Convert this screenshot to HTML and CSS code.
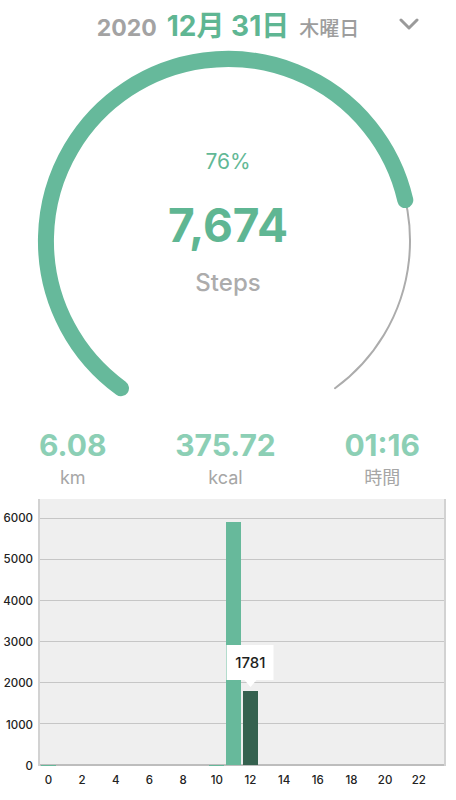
FILE: index.html
```html
<!DOCTYPE html>
<html lang="ja">
<head>
    <meta charset="UTF-8">
    <meta name="viewport" content="width=device-width, initial-scale=1.0">
    <title>Steps</title>
    <link rel="stylesheet" href="styles.css">
</head>
<body>

<div class="date-bar">
    <div></div>
    <div class="date">
        <span class="year">2020</span>
        <span class="day">12月 31日</span>
        <span class="weekday">木曜日</span>
    </div>
    <div class="toggle">
        <svg width="20" height="14" viewBox="0 0 20 14">
            <path d="M2 3 L10 11 L18 3" fill="none" stroke="#9a9a9a" stroke-width="3" stroke-linecap="round" stroke-linejoin="round"/>
        </svg>
    </div>
</div>

<div class="gauge">
    <svg class="ring" width="456" height="366" viewBox="0 44 456 366">
        <path d="M121.0 388.2 A182 182 0 1 1 335.0 388.2" fill="none" stroke="#acacac" stroke-width="2" stroke-linecap="round"/>
        <path d="M121.0 388.2 A182 182 0 1 1 405.3 200.1" fill="none" stroke="#66b99b" stroke-width="16" stroke-linecap="round"/>
    </svg>
    <div class="gauge-text">
        <div class="percent">76%</div>
        <div class="steps">7,674</div>
        <div class="unit">Steps</div>
    </div>
</div>

<div class="stats">
    <div class="stat">
        <div class="stat-value">6.08</div>
        <div class="stat-label">km</div>
    </div>
    <div class="stat">
        <div class="stat-value">375.72</div>
        <div class="stat-label">kcal</div>
    </div>
    <div class="stat">
        <div class="stat-value">01:16</div>
        <div class="stat-label">時間</div>
    </div>
</div>

<div class="chart">
    <div class="y-axis">
        <span>6000</span>
        <span>5000</span>
        <span>4000</span>
        <span>3000</span>
        <span>2000</span>
        <span>1000</span>
        <span>0</span>
    </div>
    <div class="plot">
        <div class="grid-lines">
            <div></div><div></div><div></div><div></div><div></div><div></div>
        </div>
        <div class="bars" id="bars"></div>
    </div>
    <div></div>
    <div class="x-axis" id="xAxis"></div>
</div>

<script>
    const hourly = [12, 0, 0, 0, 0, 0, 0, 0, 0, 0, 12, 5881, 1781, 0, 0, 0, 0, 0, 0, 0, 0, 0, 0, 0];
    const selected = 12;
    const max = 6000 / 248; // steps per pixel on the grid

    const bars = document.getElementById("bars");
    const xAxis = document.getElementById("xAxis");

    hourly.forEach((value, hour) => {
        const slot = document.createElement("div");
        slot.className = "slot";

        const bar = document.createElement("div");
        bar.className = hour === selected ? "bar active" : "bar";
        bar.style.height = (value / max) + "px";
        slot.appendChild(bar);

        if (hour === selected) {
            const tip = document.createElement("div");
            tip.className = "tooltip";
            tip.style.bottom = (value / max + 11) + "px";
            tip.textContent = value;
            slot.appendChild(tip);
        }
        bars.appendChild(slot);

        const label = document.createElement("span");
        label.textContent = hour % 2 === 0 ? hour : "";
        xAxis.appendChild(label);
    });
</script>

</body>
</html>
```

FILE: styles.css
```css
body {
    margin: 0;
    background-color: #fff;
    font-family: 'Inter', 'Noto Sans CJK JP', sans-serif;
    width: 456px;
    overflow: hidden;
}

.date-bar {
    display: grid;
    grid-template-columns: 1fr auto 1fr;
    align-items: center;
    height: 44px;
    padding-top: 4px;
    box-sizing: border-box;
}

.date {
    display: flex;
    align-items: baseline;
    gap: 10px;
    font-weight: bold;
    white-space: nowrap;
}

.year {
    font-size: 23px;
    color: #a3a3a3;
}

.day {
    font-size: 28px;
    color: #5fb693;
}

.weekday {
    font-size: 20px;
    color: #9d9d9d;
    font-weight: 500;
}

.toggle {
    justify-self: end;
    padding-right: 37px;
    display: flex;
}

.gauge {
    position: relative;
    height: 366px;
}

.ring {
    display: block;
}

.gauge-text {
    position: absolute;
    top: 106px;
    left: 0;
    right: 0;
    display: flex;
    flex-direction: column;
    align-items: center;
}

.percent {
    font-size: 21px;
    line-height: 24px;
    color: #62b896;
}

.steps {
    margin-top: 26px;
    font-size: 46px;
    line-height: 50px;
    font-weight: bold;
    color: #5fb693;
}

.unit {
    margin-top: 19px;
    font-size: 24px;
    line-height: 28px;
    font-weight: 500;
    color: #acacac;
}

.stats {
    display: flex;
    justify-content: space-between;
    padding: 17px 36px 11px 39px;
}

.stat {
    display: flex;
    flex-direction: column;
    align-items: center;
}

.stat-value {
    font-size: 30px;
    line-height: 36px;
    font-weight: bold;
    color: #8ccfb5;
}

.stat-label {
    margin-top: 5px;
    font-size: 18px;
    line-height: 20px;
    color: #a6a6a6;
}

.chart {
    display: grid;
    grid-template-columns: 38px 408px;
    font-size: 11.5px;
    font-weight: 500;
    color: #222;
}

.y-axis {
    display: flex;
    flex-direction: column;
    justify-content: space-between;
    align-items: flex-end;
    padding: 12px 5px 0 0;
    margin-bottom: -7px;
    line-height: 14px;
}

.plot {
    position: relative;
    height: 267px;
    background-color: #efefef;
    border-left: 2px solid #d2d2d2;
    border-right: 2px solid #d2d2d2;
    box-sizing: border-box;
}

.grid-lines {
    margin-top: 19px;
    height: 248px;
    display: flex;
    flex-direction: column;
    border-bottom: 2px solid #bdbdbd;
    box-sizing: border-box;
}

.grid-lines div {
    flex: 1;
    border-top: 1.5px solid #c6c6c6;
}

.bars {
    position: absolute;
    left: 0;
    right: 0;
    bottom: 1px;
    height: 248px;
    display: grid;
    grid-template-columns: repeat(24, 1fr);
    align-items: end;
}

.slot {
    position: relative;
    display: flex;
    justify-content: center;
    align-items: flex-end;
    height: 100%;
}

.bar {
    width: 15px;
    background-color: #67b99b;
}

.bar.active {
    background-color: #35614f;
}

.tooltip {
    position: absolute;
    left: 50%;
    transform: translateX(-50%);
    width: 47px;
    height: 35px;
    background-color: #fff;
    font-size: 15px;
    line-height: 35px;
    text-align: center;
    color: #1e1e1e;
}

.tooltip::after {
    content: "";
    position: absolute;
    left: 50%;
    top: 35px;
    margin-left: -6px;
    border-left: 6px solid transparent;
    border-right: 6px solid transparent;
    border-top: 7px solid #fff;
}

.x-axis {
    display: grid;
    grid-template-columns: repeat(24, 1fr);
    padding: 7px 2px 0 2px;
    text-align: center;
    line-height: 14px;
}
```
